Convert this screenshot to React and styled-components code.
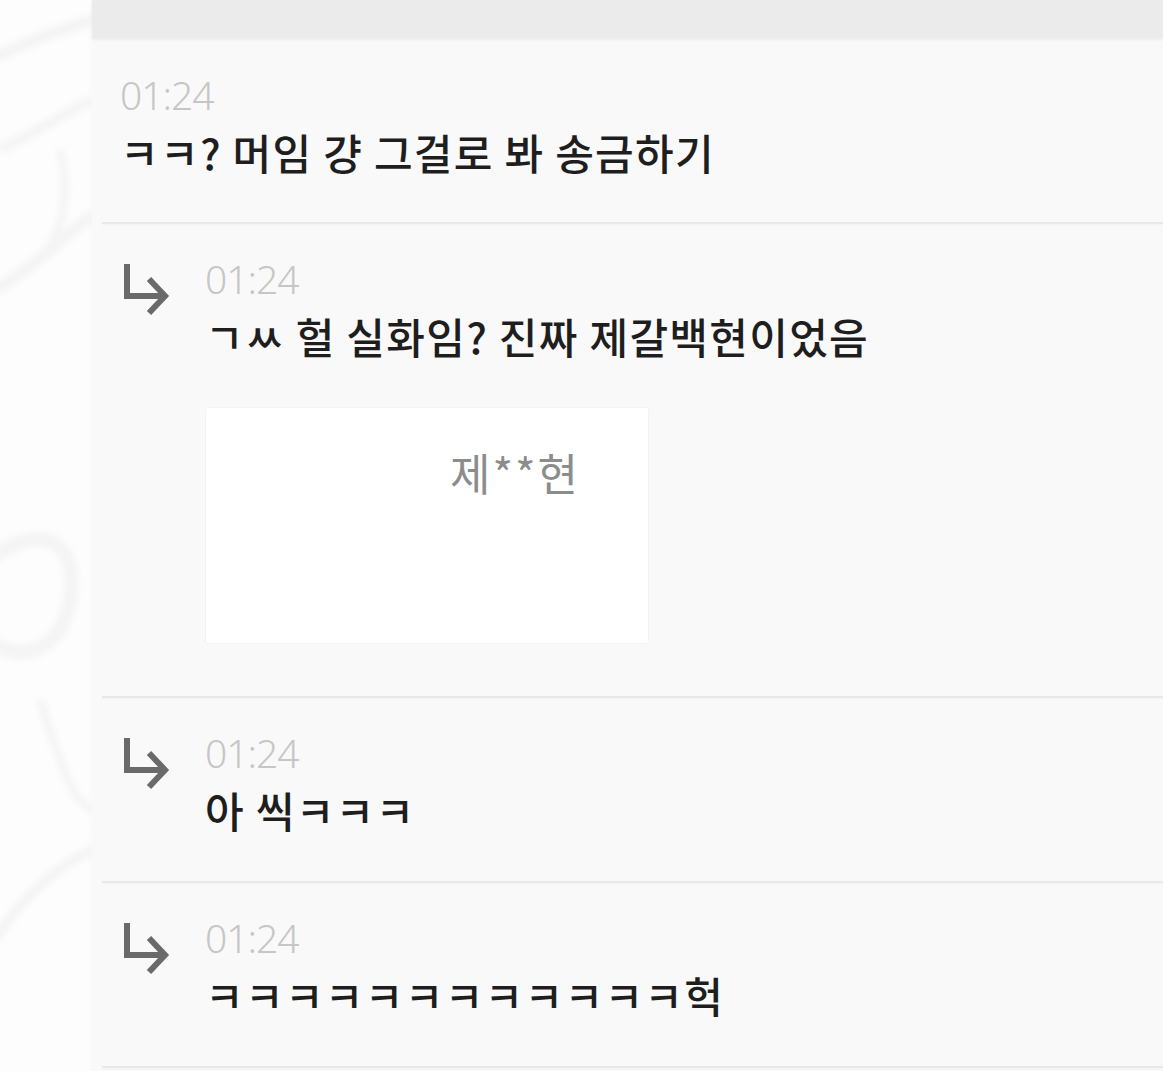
import React from 'react'
import styled, { createGlobalStyle } from 'styled-components'

const GlobalStyle = createGlobalStyle`
  html, body {
    margin: 0;
    padding: 0;
    background: #fdfdfd;
  }
  * { box-sizing: border-box; }
`

const messages = [
  { id: 1, reply: false, time: '01:24', text: 'ㅋㅋ? 머임 걍 그걸로 봐 송금하기' },
  { id: 2, reply: true, time: '01:24', text: 'ㄱㅆ 헐 실화임? 진짜 제갈백현이었음', card: '제**현' },
  { id: 3, reply: true, time: '01:24', text: '아 씩ㅋㅋㅋ' },
  { id: 4, reply: true, time: '01:24', text: 'ㅋㅋㅋㅋㅋㅋㅋㅋㅋㅋㅋㅋ헉' },
]

const ReplyArrow = () => (
  <svg width="50" height="58" viewBox="0 0 50 58" fill="none">
    <path d="M7 3 V35 H44" stroke="#6a6a6a" strokeWidth="6" strokeLinejoin="miter" />
    <path d="M29 18 L45 35 L29 52" stroke="#6a6a6a" strokeWidth="6" strokeLinejoin="miter" />
  </svg>
)

const Watermark = () => (
  <svg width="92" height="1071" viewBox="0 0 92 1071" fill="none">
    <defs>
      <filter id="soft">
        <feGaussianBlur stdDeviation="3" />
      </filter>
    </defs>
    <g filter="url(#soft)" stroke="#f4f4f4">
      <path d="M-10 60 C 30 40, 60 30, 92 20" strokeWidth="12" />
      <path d="M0 150 C 40 130, 70 110, 92 100" strokeWidth="10" />
      <path d="M-5 290 C 30 270, 60 240, 92 215" strokeWidth="12" />
      <path d="M60 150 C 70 190, 65 230, 40 260" strokeWidth="8" />
      <path d="M-10 560 C 40 520, 80 540, 70 600 C 60 660, 10 660, -10 640" strokeWidth="14" />
      <path d="M40 700 C 60 760, 70 800, 92 810" strokeWidth="8" />
      <path d="M-5 940 C 20 900, 50 870, 92 850" strokeWidth="10" />
    </g>
  </svg>
)

export default function App() {
  return (
    <>
      <GlobalStyle />
      <Page>
        <Side>
          <Watermark />
        </Side>
        <Panel>
          <Header />
          <List>
            {messages.map((m) => (
              <Row key={m.id} $reply={m.reply}>
                {m.reply && (
                  <ArrowCell>
                    <ReplyArrow />
                  </ArrowCell>
                )}
                <Body>
                  <Time>{m.time}</Time>
                  <Text>{m.text}</Text>
                  {m.card && (
                    <Card>
                      <CardName>{m.card}</CardName>
                    </Card>
                  )}
                </Body>
              </Row>
            ))}
          </List>
        </Panel>
      </Page>
    </>
  )
}

const Page = styled.div`
  display: flex;
  width: 100%;
  height: 1071px;
  overflow: hidden;
`

const Side = styled.div`
  width: 92px;
  flex-shrink: 0;
  background: #fdfdfd;
  overflow: hidden;
  svg { display: block; }
`

const Panel = styled.div`
  flex: 1;
  display: flex;
  flex-direction: column;
  background: #f9f9f9;
  box-shadow: -2px 0 4px rgba(0, 0, 0, 0.02);
`

const Header = styled.div`
  height: 38px;
  flex-shrink: 0;
  background: #ebebeb;
  box-shadow: 0 2px 3px rgba(0, 0, 0, 0.05);
`

const List = styled.div`
  display: flex;
  flex-direction: column;
  padding-top: 2px;
`

const Row = styled.div`
  display: flex;
  margin-left: 10px;
  padding: 32px 0 ${(p) => (p.$reply ? '47px' : '46px')} 18px;
  border-bottom: 2px solid #e8e8e8;
  box-shadow: 0 1px 2px rgba(0, 0, 0, 0.03);
`

const ArrowCell = styled.div`
  width: 85px;
  flex-shrink: 0;
  padding-top: 5px;
  svg { display: block; }
`

const Body = styled.div`
  display: flex;
  flex-direction: column;
  align-items: flex-start;
`

const Time = styled.div`
  font-family: 'Noto Sans', 'Open Sans', sans-serif;
  font-weight: 300;
  font-size: 39px;
  line-height: 46px;
  color: #c6c6c6;
  letter-spacing: -1px;
`

const Text = styled.div`
  margin-top: 10px;
  font-family: 'Noto Sans CJK KR', 'Noto Sans', sans-serif;
  font-weight: 500;
  font-size: 42px;
  line-height: 48px;
  letter-spacing: 1.3px;
  color: #1e1e1e;
  white-space: nowrap;
`

const Card = styled.div`
  margin-top: 47px;
  width: 444px;
  height: 237px;
  background: #ffffff;
  border: 1px solid #f3f3f3;
  border-radius: 3px;
  padding: 38px 0 0 244px;
  margin-bottom: 5px;
`

const CardName = styled.div`
  font-family: 'Noto Sans CJK KR', 'Noto Sans', sans-serif;
  font-size: 44px;
  line-height: 52px;
  letter-spacing: 2px;
  color: #8c8c8c;
  white-space: nowrap;
`
